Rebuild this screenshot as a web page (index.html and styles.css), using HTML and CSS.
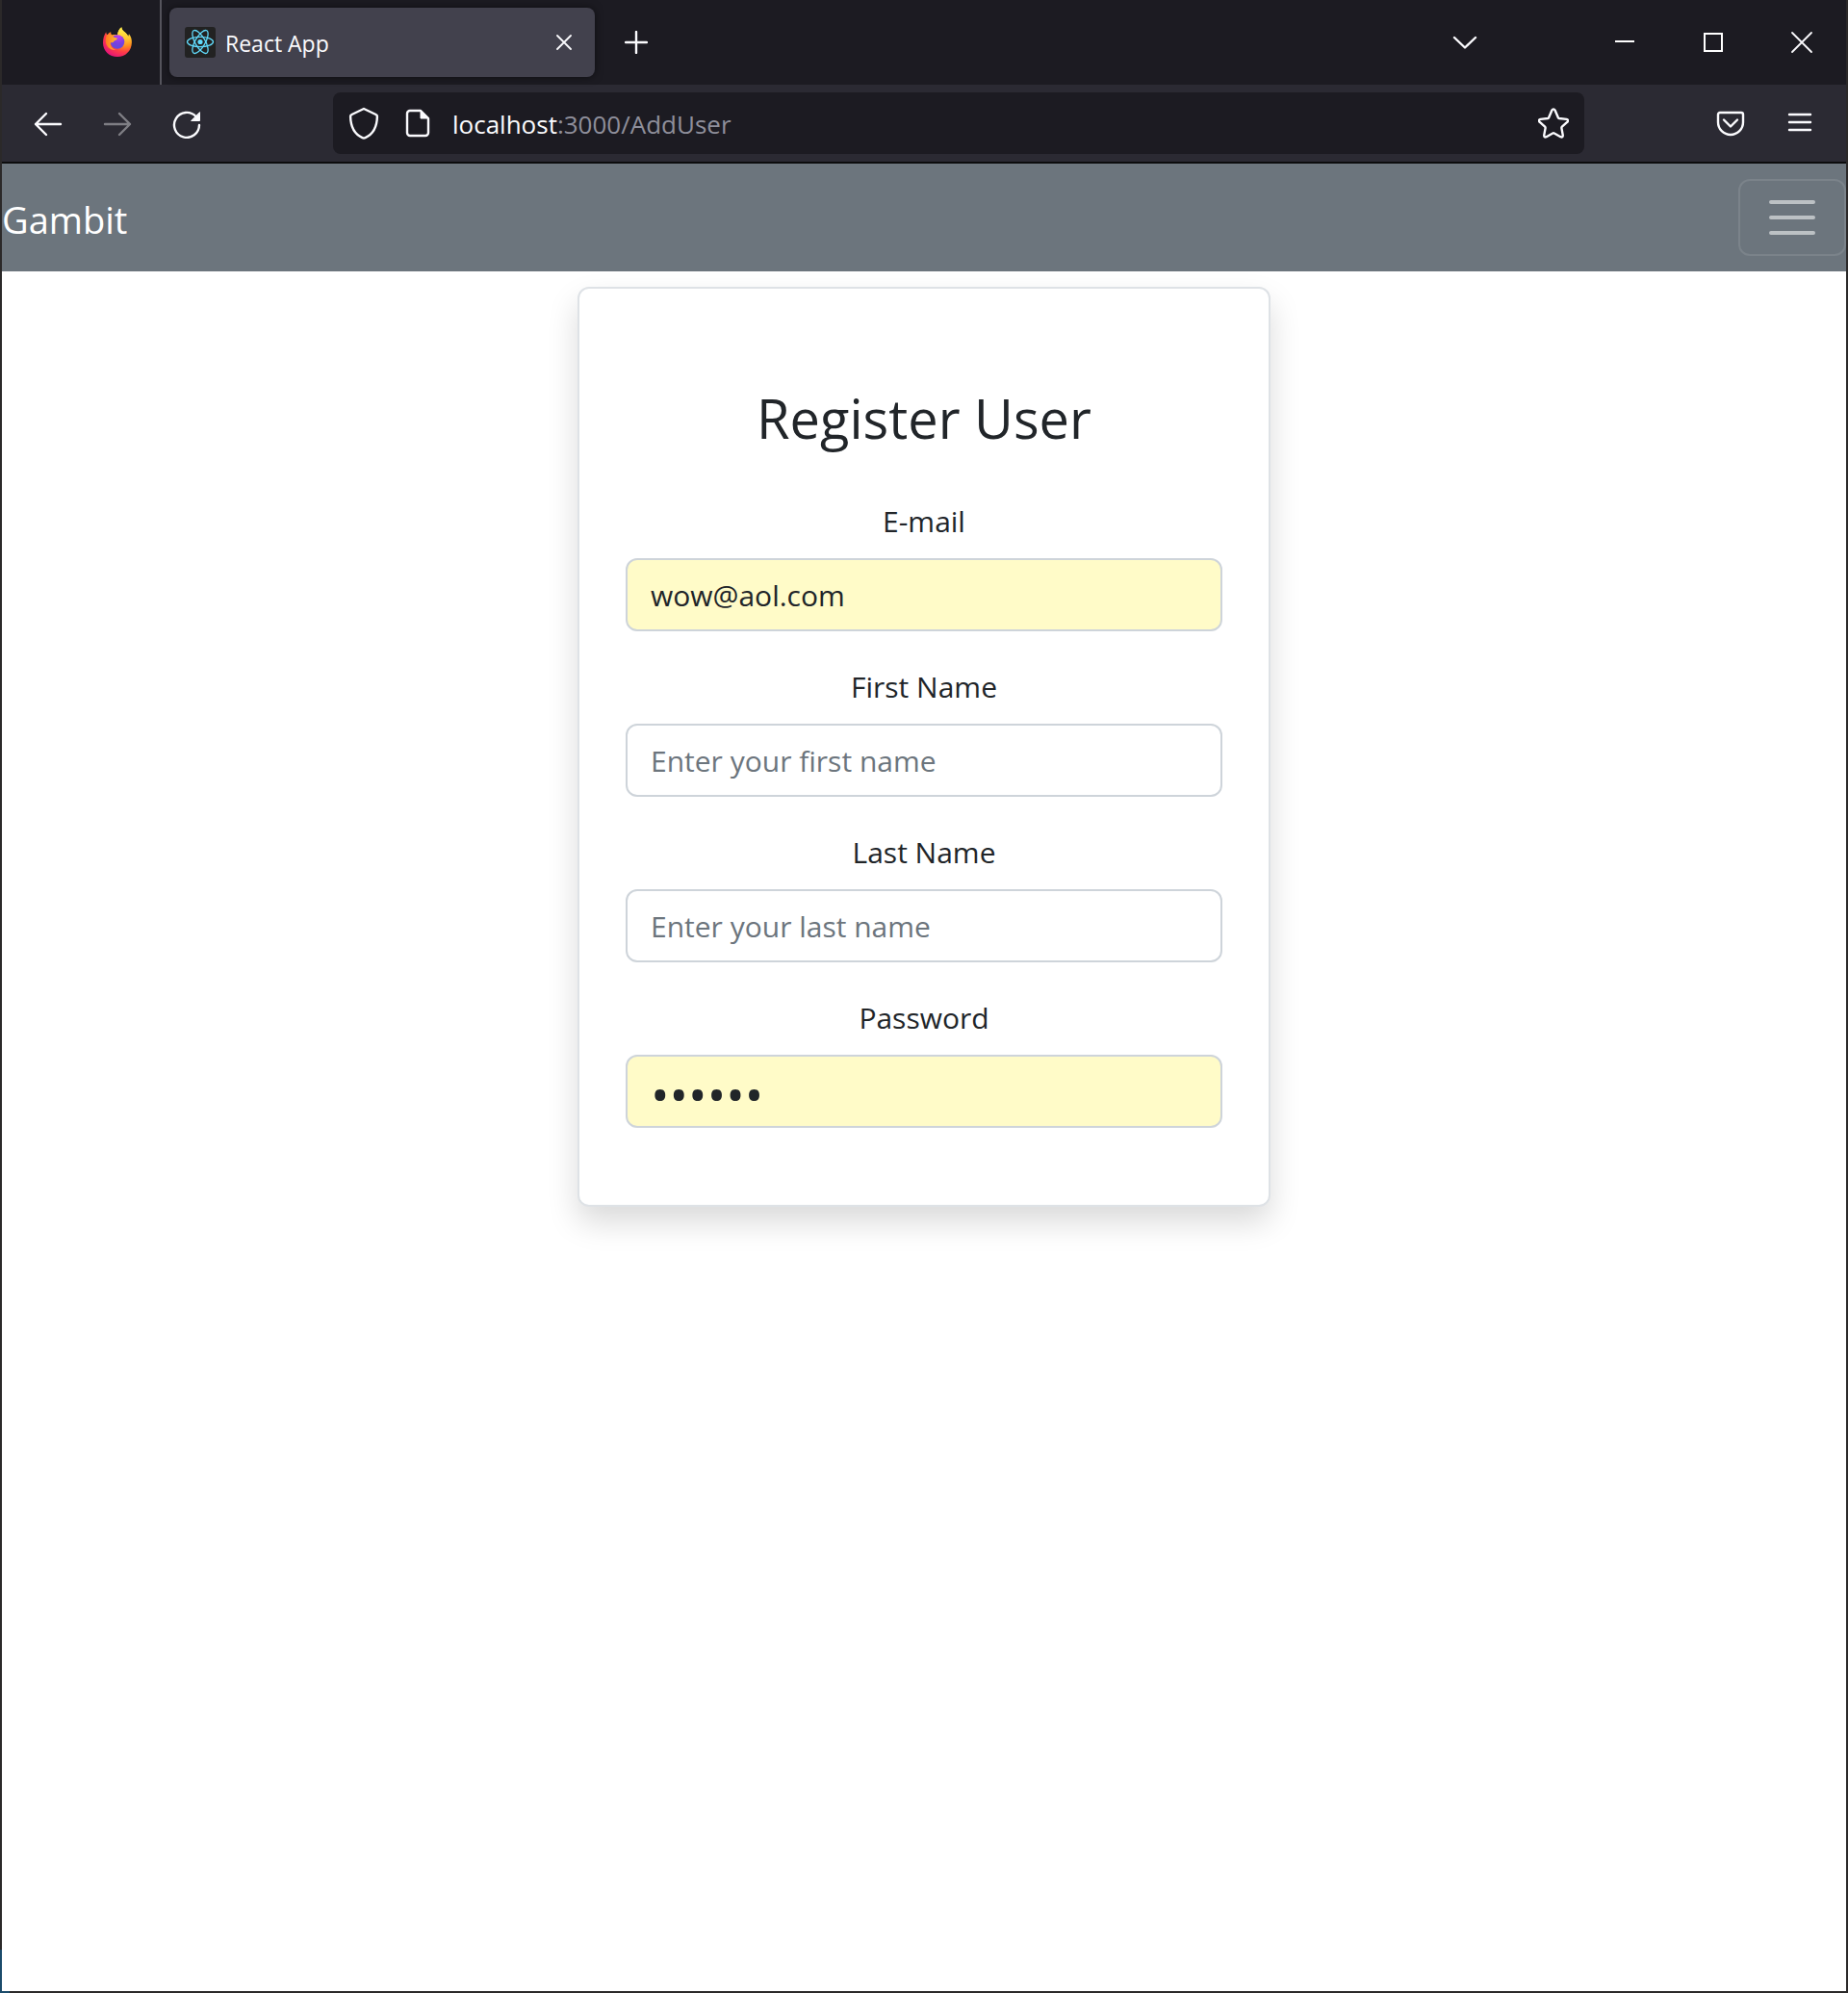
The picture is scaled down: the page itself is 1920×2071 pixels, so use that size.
FILE: index.html
```html
<!DOCTYPE html>
<html lang="en">
<head>
  <meta charset="utf-8">
  <meta name="viewport" content="width=device-width, initial-scale=1">
  <title>React App</title>
  <link rel="stylesheet" href="styles.css">
</head>
<body>
  <div class="window">
    <header class="chrome">
      <div class="tabstrip">
        <button class="firefox-view" type="button" aria-label="Firefox">
          <svg width="32" height="32" viewBox="0 0 32 32" aria-hidden="true">
            <defs>
              <radialGradient id="flame" cx="78%" cy="12%" r="100%">
                <stop offset="0" stop-color="#fff44f"/>
                <stop offset=".3" stop-color="#ffc42e"/>
                <stop offset=".52" stop-color="#ff8b1e"/>
                <stop offset=".72" stop-color="#ff3d47"/>
                <stop offset="1" stop-color="#e3107c"/>
              </radialGradient>
              <linearGradient id="tail" x1="0" y1="0" x2="0" y2="1">
                <stop offset="0" stop-color="#fff251"/>
                <stop offset=".5" stop-color="#ffcb30"/>
                <stop offset="1" stop-color="#ff7a2c" stop-opacity="0"/>
              </linearGradient>
              <radialGradient id="globe" cx="60%" cy="10%" r="100%">
                <stop offset="0" stop-color="#c03df0"/>
                <stop offset=".5" stop-color="#7b3fe0"/>
                <stop offset="1" stop-color="#5a4fd8"/>
              </radialGradient>
              <linearGradient id="head" x1="0" y1="0" x2="1" y2="0">
                <stop offset="0" stop-color="#ff7a20"/>
                <stop offset="1" stop-color="#ffbd2f"/>
              </linearGradient>
            </defs>
            <path fill="url(#flame)" d="M4.200 5.300C4.300 6.600 4.700 7.600 5.400 8.300 6.200 7 7.500 5.900 9.200 5.200 9 6.400 9.500 7.500 10.200 8.300 12 7.800 14 8 16 8.200 16.200 5 17.800 2 20.300.2 20.400 2.700 22.200 4.200 24.400 6.100 25.800 7.400 26.700 8.600 27.200 9.800L28 7.200C30.400 10 31 13.400 30.900 16.200 30.700 24.800 24.400 31 16 31 7.500 31 1 24.700 1 16.400 1 12 2.200 8.300 4.200 5.300Z"/>
            <path fill="url(#tail)" d="M20.300.2C17.800 2 16.200 5 16.200 8.200 20 8.600 22 11 22.300 14 23 18 21 21 18.500 22.500 25 22 28 16 27.200 9.800 26.700 8.600 25.800 7.400 24.400 6.100 22.200 4.200 20.400 2.700 20.300.2Z"/>
            <circle cx="16" cy="15.500" r="7.300" fill="url(#globe)"/>
            <path fill="url(#head)" d="M5.400 8.300C7 8 9 8 10.200 8.500 11 10.300 13 11.200 16 11.700 16 13 14.500 13.500 13.200 14.200 12 14.900 12 16 10.800 16.300 9.800 16.500 9 16 8.700 16.800 8.400 20 11 23.500 15 23.800 8 24.500 4 20 3.800 15 3.700 12 4.300 10 5.400 8.300Z"/>
          </svg>
        </button>
        <div class="tab">
          <svg class="tab-icon" width="32" height="32" viewBox="0 0 32 32" aria-hidden="true">
            <rect width="32" height="32" rx="3" fill="#222"/>
            <g fill="none" stroke="#61dafb" stroke-width="1.300">
              <ellipse cx="16" cy="15.500" rx="13.500" ry="5.200"/>
              <ellipse cx="16" cy="15.500" rx="13.500" ry="5.200" transform="rotate(60 16 15.500)"/>
              <ellipse cx="16" cy="15.500" rx="13.500" ry="5.200" transform="rotate(120 16 15.500)"/>
            </g>
            <circle cx="16" cy="15.500" r="2.600" fill="#61dafb"/>
          </svg>
          <span class="tab-title">React App</span>
          <button class="tab-close" type="button" aria-label="Close tab">
            <svg width="16" height="16" viewBox="0 0 16 16" class="line thin"><path d="M1 1l14 14M15 1L1 15"/></svg>
          </button>
        </div>
        <button class="new-tab" type="button" aria-label="New tab">
          <svg width="24" height="24" viewBox="0 0 24 24" class="line"><path d="M12 1v22M1 12h22"/></svg>
        </button>
        <button class="all-tabs" type="button" aria-label="List all tabs">
          <svg width="26" height="16" viewBox="0 0 26 16" class="line"><path d="M2 3l11 10.500L24 3"/></svg>
        </button>
        <div class="window-controls">
          <button type="button" aria-label="Minimize">
            <svg width="24" height="24" viewBox="0 0 24 24"><path fill="#fff" d="M2 10h20v2H2z"/></svg>
          </button>
          <button type="button" aria-label="Maximize">
            <svg width="24" height="24" viewBox="0 0 24 24"><path fill="none" stroke="#fff" stroke-width="2" d="M3 3h18v18H3z"/></svg>
          </button>
          <button type="button" aria-label="Close">
            <svg width="24" height="24" viewBox="0 0 24 24" class="line thin"><path d="M2 2l20 20M22 2L2 22"/></svg>
          </button>
        </div>
      </div>
      <div class="toolbar">
        <button type="button" aria-label="Back">
          <svg width="32" height="32" viewBox="0 0 32 32" class="line"><path d="M14 6L3 17l11 11M3 17h26"/></svg>
        </button>
        <button type="button" aria-label="Forward" disabled>
          <svg width="32" height="32" viewBox="0 0 32 32" class="line"><path d="M18 6l11 11-11 11M29 17H3"/></svg>
        </button>
        <button type="button" aria-label="Reload">
          <svg width="32" height="32" viewBox="0 0 32 32" class="line"><path d="M25.500 9A13 13 0 1 0 29 18"/><path class="solid" d="M29.500 5v8.500H21z"/></svg>
        </button>
        <div class="urlbar">
          <svg width="32" height="36" viewBox="0 0 32 36" class="line"><path d="M16 3l12.500 6q1.500.7 1.400 2C29.700 21.500 25.500 29.500 17.500 33.100q-1.500.7-3 0C6.500 29.500 2.300 21.500 2.100 11q-.1-1.300 1.400-2z"/></svg>
          <svg width="28" height="32" viewBox="0 0 28 32" class="line"><path d="M17 3H6a3 3 0 0 0-3 3v20a3 3 0 0 0 3 3h16a3 3 0 0 0 3-3V11z"/><path class="solid" d="M17 3v8h8z"/></svg>
          <div class="url" role="textbox" aria-label="Address"><span class="host">localhost</span>:3000/AddUser</div>
          <button type="button" class="star" aria-label="Bookmark this page">
            <svg width="32" height="32" viewBox="0 0 32 32" class="line"><path d="M14.300 2.700q1.700-2.600 3.400 0l3.200 7.500q.3.700 1 .8l7.600.9q2.600.7 1 2.800l-5.600 5q-.6.600-.5 1.400l1.400 7.500q0 2.600-2.400 1.600L16.800 26.500q-.8-.4-1.600 0l-6.600 3.700q-2.400 1-2.400-1.600l1.400-7.500q.1-.8-.5-1.400l-5.600-5q-1.600-2.100 1-2.800l7.600-.9q.7-.1 1-.8z"/></svg>
          </button>
        </div>
        <button type="button" aria-label="Save to Pocket">
          <svg width="32" height="32" viewBox="0 0 32 32" class="line"><path d="M5 5h22a2 2 0 0 1 2 2v8a13 13 0 0 1-26 0V7a2 2 0 0 1 2-2z"/><path d="M9 12.500l7 7 7-7"/></svg>
        </button>
        <button type="button" aria-label="Open application menu">
          <svg width="32" height="32" viewBox="0 0 32 32" class="line"><path d="M5 7h22M5 15h22M5 23h22"/></svg>
        </button>
      </div>
    </header>

    <nav class="navbar">
      <a class="brand" href="#">Gambit</a>
      <button class="toggler" type="button" aria-label="Toggle navigation">
        <svg width="60" height="60" viewBox="0 0 60 60" aria-hidden="true"><path fill="none" stroke="#fff" stroke-opacity=".55" stroke-width="4" stroke-linecap="round" d="M8 14h44M8 30h44M8 46h44"/></svg>
      </button>
    </nav>

    <main class="page">
      <form class="card">
        <h1 class="card-title">Register User</h1>
        <div class="field">
          <label for="email">E-mail</label>
          <input class="autofilled" id="email" type="email" value="wow@aol.com">
        </div>
        <div class="field">
          <label for="first-name">First Name</label>
          <input id="first-name" type="text" placeholder="Enter your first name">
        </div>
        <div class="field">
          <label for="last-name">Last Name</label>
          <input id="last-name" type="text" placeholder="Enter your last name">
        </div>
        <div class="field">
          <label for="password">Password</label>
          <input class="autofilled" id="password" type="password" value="gambit">
        </div>
      </form>
    </main>
  </div>
</body>
</html>
```
FILE: styles.css
```css
* {
  box-sizing: border-box;
}

body {
  margin: 0;
  min-height: 100vh;
  display: flex;
  font-family: "Open Sans", "Noto Sans", sans-serif;
  font-size: 30px;
  line-height: 48px;
  color: #212529;
  background: linear-gradient(#1b4b6b, #1b4b6b) left bottom / 10px 45px no-repeat #2b2929;
}

button {
  display: flex;
  align-items: center;
  justify-content: center;
  padding: 0;
  border: 0;
  background: none;
  color: #fff;
  font: inherit;
}

svg {
  display: block;
  flex: none;
}

.line {
  fill: none;
  stroke: #fbfbfe;
  stroke-width: 2.400;
  stroke-linecap: round;
  stroke-linejoin: round;
}

.thin {
  stroke-width: 1.800;
}

.solid {
  fill: #fbfbfe;
  stroke-width: 1;
}

.window {
  flex: 1;
  display: flex;
  flex-direction: column;
  margin: 0 2px 2px;
  background: #fff;
}

.chrome {
  border-bottom: 2px solid #0c0c0d;
}

.tabstrip {
  display: flex;
  align-items: center;
  height: 88px;
  background: #1c1b22;
}

.firefox-view {
  align-self: stretch;
  width: 166px;
  padding-left: 76px;
  border-right: 2px solid #55545c;
}

.tab {
  display: flex;
  align-items: center;
  width: 442px;
  height: 72px;
  margin-left: 8px;
  padding: 0 16px;
  border-radius: 8px;
  background: #42414d;
  box-shadow: 0 0 8px rgba(0, 0, 0, 0.5);
  color: #fbfbfe;
  font-size: 23px;
}

.tab-title {
  flex: 1;
  margin-left: 10px;
  padding-top: 2px;
}

.tab-close {
  width: 32px;
  height: 32px;
}

.new-tab {
  width: 72px;
  height: 72px;
  margin-left: 7px;
}

.all-tabs {
  width: 72px;
  height: 72px;
  margin-left: auto;
}

.window-controls {
  display: flex;
  align-self: stretch;
  margin-left: 84px;
}

.window-controls button {
  width: 92px;
}

.toolbar {
  display: flex;
  align-items: center;
  height: 80px;
  padding: 0 12px;
  background: #2b2a33;
}

.toolbar > button {
  width: 72px;
  height: 64px;
}

.toolbar > button:disabled {
  opacity: 0.4;
}

.urlbar {
  flex: 1;
  display: flex;
  align-items: center;
  height: 64px;
  margin: 0 116px;
  padding: 0 16px;
  border-radius: 8px;
  background: #1c1b22;
}

.urlbar svg + svg {
  margin-left: 26px;
}

.url {
  flex: 1;
  margin-left: 22px;
  padding-top: 2px;
  font-size: 26px;
  color: #8f8f9b;
}

.host {
  color: #fbfbfe;
}

.navbar {
  display: flex;
  align-items: center;
  justify-content: space-between;
  height: 112px;
  background: #6c757d;
}

.brand {
  padding-top: 4px;
  color: #fff;
  font-size: 38px;
  text-decoration: none;
}

.toggler {
  width: 112px;
  height: 80px;
  border: 2px solid rgba(255, 255, 255, 0.1);
  border-radius: 12px;
}

.page {
  padding: 16px;
}

.card {
  max-width: 720px;
  margin: 0 auto;
  padding: 98px 48px 80px;
  border: 2px solid #dee2e6;
  border-radius: 12px;
  background: #fff;
  box-shadow: 0 16px 32px rgba(0, 0, 0, 0.15);
  text-align: center;
}

.card-title {
  margin: 0 0 48px;
  font-size: 56px;
  font-weight: 400;
  line-height: 72px;
}

.field + .field {
  margin-top: 34px;
}

.field label {
  display: block;
  margin-bottom: 14px;
}

.field input {
  display: block;
  width: 100%;
  height: 76px;
  padding: 0 24px;
  border: 2px solid #ced4da;
  border-radius: 12px;
  background: #fff;
  color: #212529;
  font: inherit;
}

/* Larger type gives the masking dots their full size */
.field input[type="password"] {
  padding-top: 4px;
  font-size: 52px;
}

.field input::placeholder {
  color: #6c757d;
  opacity: 1;
}

.field .autofilled {
  background: #fffbc8;
}
```
